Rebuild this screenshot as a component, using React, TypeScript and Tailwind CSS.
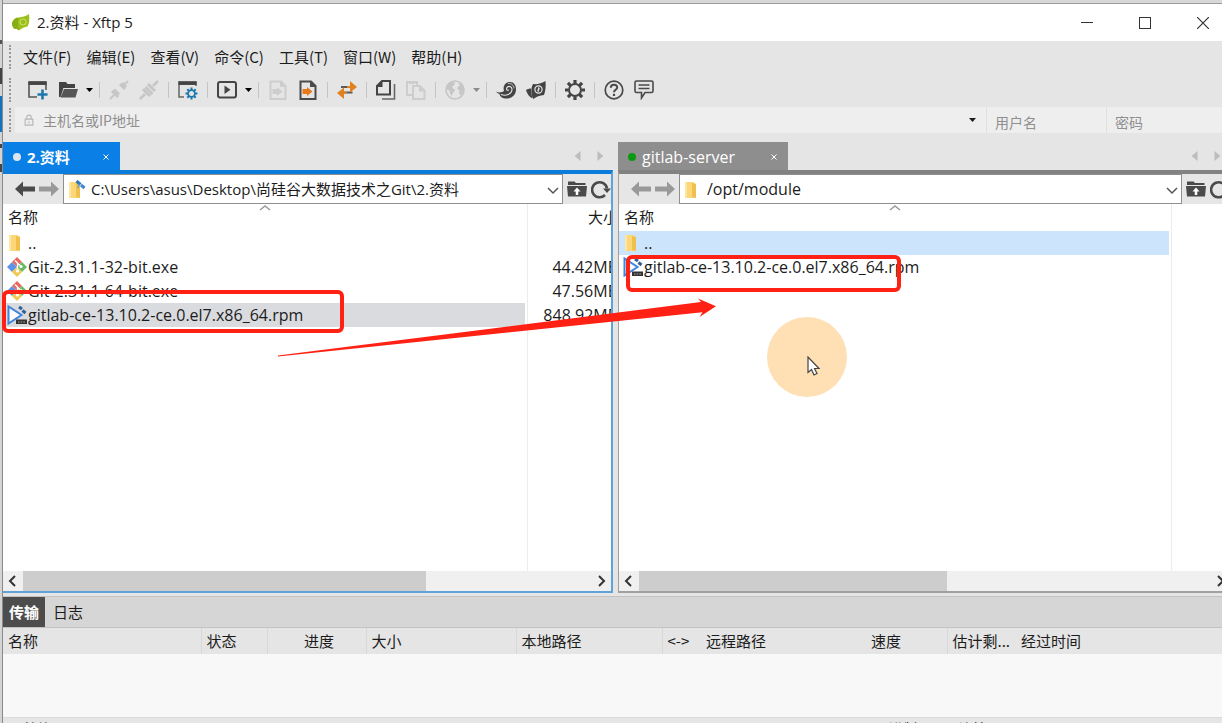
import { useState } from "react";
import type { ReactNode } from "react";
import clsx from "clsx";

interface FileItem {
  name: string;
  kind: "folder" | "git" | "rpm";
  size?: string;
}

interface PaneProps {
  id: string;
  title: string;
  path: string;
  files: FileItem[];
  active?: boolean;
  initialSelected: string;
}

const menuItems = ["文件(F)", "编辑(E)", "查看(V)", "命令(C)", "工具(T)", "窗口(W)", "帮助(H)"];

const localFiles: FileItem[] = [
  { name: "..", kind: "folder" },
  { name: "Git-2.31.1-32-bit.exe", kind: "git", size: "44.42MB" },
  { name: "Git-2.31.1-64-bit.exe", kind: "git", size: "47.56MB" },
  { name: "gitlab-ce-13.10.2-ce.0.el7.x86_64.rpm", kind: "rpm", size: "848.92MB" },
];

const remoteFiles: FileItem[] = [
  { name: "..", kind: "folder" },
  { name: "gitlab-ce-13.10.2-ce.0.el7.x86_64.rpm", kind: "rpm" },
];

const transferColumns = [
  { title: "名称", className: "w-[198px]" },
  { title: "状态", className: "w-[66px] border-l" },
  { title: "进度", className: "w-[99px] border-l text-center" },
  { title: "大小", className: "w-[150px] border-l text-left" },
  { title: "本地路径", className: "w-[146px] border-l" },
  { title: "<->", className: "w-[39px] border-l" },
  { title: "远程路径", className: "w-[165px]" },
  { title: "速度", className: "w-[81px]" },
  { title: "估计剩...", className: "w-[69px] border-l" },
  { title: "经过时间", className: "" },
];

const Icon = ({ children, className }: { children: ReactNode; className?: string }) => (
  <svg viewBox="0 0 20 20" className={clsx("block size-5 shrink-0", className)} fill="none" aria-hidden="true">
    {children}
  </svg>
);

const NewIcon = () => (
  <Icon>
    <path d="M9 17H1V2h17v8" stroke="#555" strokeWidth="1.6" />
    <path d="M.5 3.2h18" stroke="#444" strokeWidth="3.5" />
    <path d="M14.5 9.500v10M9.500 14.500h10" stroke="#1d78ae" strokeWidth="2.600" />
  </Icon>
);

const OpenIcon = () => (
  <Icon>
    <path d="M1 17V2h7l1.500 2H17v4H5.500L2.500 17z" fill="#444" />
    <path d="M6 9h14l-2.500 8.500H2.500z" fill="#555" />
    <path d="M5.500 8.500h13" stroke="#e5e5e5" />
  </Icon>
);

const LinkIcon = () => (
  <Icon>
    <g stroke="#c6c6c6" strokeWidth="3">
      <path d="M1 19l4-4M15 5l4-4" strokeWidth="2" />
      <path d="M3 11l6 6M5 9.500l5 5" />
      <path d="M11 4l5 5M13 3l4 4" />
    </g>
  </Icon>
);

const UnlinkIcon = () => (
  <Icon>
    <g stroke="#c6c6c6">
      <path d="M1 19l5-5M14 6l5-5" strokeWidth="2.500" />
      <path d="M4 9l7 7M9 4l7 7" strokeWidth="3" />
      <path d="M6.500 7l7 7" strokeWidth="2.500" />
    </g>
  </Icon>
);

const PropertiesIcon = () => (
  <Icon>
    <path d="M6 17H1V2h17v4" stroke="#666" strokeWidth="1.500" />
    <path d="M.5 3.200h18" stroke="#444" strokeWidth="3.500" />
    <circle cx="13.500" cy="13.500" r="3.400" stroke="#1d78ae" strokeWidth="1.800" />
    <path
      d="M13.500 7.500v2.500M13.500 17v2.500M7.500 13.500H10M17 13.500h2.500M9.300 9.300l1.700 1.700M16 16l1.700 1.700M17.700 9.300L16 11M11 16l-1.700 1.700"
      stroke="#1d78ae"
      strokeWidth="2"
    />
  </Icon>
);

const PlayIcon = () => (
  <Icon>
    <rect x="1" y="2" width="18" height="15.500" rx="2" stroke="#444" strokeWidth="2" />
    <path d="M7.500 5.500v8.500l6-4.250z" fill="#444" />
  </Icon>
);

const DocArrowIcon = ({ muted }: { muted?: boolean }) => (
  <Icon>
    <path d="M2.500 1.500h10.500l4.500 4.500v13h-15z" stroke={muted ? "#cdcdcd" : "#4a4a4a"} strokeWidth="2" />
    <path d="M12 1v6h6z" fill={muted ? "#cdcdcd" : "#4a4a4a"} />
    <path d="M4.500 9h4.500V7l5.500 4.500L9 16v-2H4.500z" fill={muted ? "#cdcdcd" : "#e77a1d"} />
  </Icon>
);

const TransferIcon = () => (
  <Icon>
    <path d="M4 7h10M6 12.500h9.500" stroke="#5a5a5a" strokeWidth="1.800" />
    <path d="M13 1l7 6-7 5.500zM7 7.500L0 13l7 6z" fill="#e0821f" />
    <path d="M10 7h4M6 12.500h4" stroke="#e0821f" strokeWidth="2.200" />
  </Icon>
);

const CopyIcon = () => (
  <Icon>
    <path d="M6 1h8v13.500H1V6z" stroke="#444" strokeWidth="2" />
    <path d="M6.500 1v6H1z" fill="#444" />
    <path d="M18.500 4v15H6" stroke="#666" strokeWidth="1.600" />
  </Icon>
);

const PasteIcon = () => (
  <Icon>
    <path d="M6 15H1V2h10v3" stroke="#cdcdcd" strokeWidth="2" />
    <path d="M3 1h6v3H3z" fill="#cdcdcd" />
    <path d="M7 6h7l4.500 4.500V19H7z" stroke="#cdcdcd" strokeWidth="2" />
    <path d="M13 6v5.500h5" fill="#cdcdcd" />
  </Icon>
);

const GlobeIcon = () => (
  <Icon>
    <circle cx="10" cy="10" r="9" stroke="#c6c6c6" strokeWidth="1.600" />
    <path d="M2 6.500L6 2l4 .5-1 3-2 1 1 2 2 1-1 2.500-1.500 1-.5 3-2-2.500-.5-3L2 9.500zM13 3l3 1 2.500 4-1 5-2 2.500-1.500-2.500.5-2.500-2-1.500.5-2.500 2-1z" fill="#c6c6c6" />
  </Icon>
);

const ShellIcon = () => (
  <Icon>
    <path d="M0 11.500c3 1.500 6 1 8-.5C6.500 6 9.500 2 14 2c4 0 6 3.500 6 7 0 6-4 9.500-9.500 9.500C6 18.500 4 16.500 3.500 14 2 13.500.8 12.500 0 11.500z" fill="#444" />
    <path d="M5 14.500c5 2 10.500-.5 11-4.500.3-3-2.700-4.500-4.500-3s-.8 4 1.500 3" stroke="#e5e5e5" strokeWidth="1.100" />
    <path d="M12 3.500c3-.5 6 1.500 6 5" stroke="#e5e5e5" strokeWidth=".8" />
  </Icon>
);

const LeafIcon = () => (
  <Icon>
    <path d="M7 4c4 .5 9-.5 12.500-3 .5 5 0 10-1.500 14-4 .5-8 1.500-10.500 4C5 16 4.500 8.500 7 4z" fill="#444" />
    <path d="M0 10c2-1 3-1.500 5-1.500 0 3 .5 7 1.500 10C3 17 1 13.500 0 10z" fill="#444" />
    <circle cx="12.500" cy="9.500" r="3.600" stroke="#e5e5e5" strokeWidth="1.200" />
    <path d="M12 11.500l1-4" stroke="#e5e5e5" strokeWidth="1.500" />
  </Icon>
);

const GearIcon = () => (
  <Icon>
    <circle cx="10" cy="10" r="6" stroke="#444" strokeWidth="2" />
    <path
      d="M10 0v3.500M10 16.500V20M0 10h3.500M16.500 10H20M2.900 2.900l2.500 2.500M14.600 14.600l2.500 2.500M17.100 2.900l-2.500 2.500M5.400 14.600l-2.500 2.500"
      stroke="#444"
      strokeWidth="3.200"
    />
  </Icon>
);

const HelpIcon = () => (
  <Icon>
    <circle cx="10" cy="10" r="8.800" stroke="#4a4a4a" strokeWidth="1.700" />
    <path d="M6.800 7.800c0-4 6.400-4 6.400-.4 0 2.200-3.200 2.500-3.200 4.800" stroke="#4a4a4a" strokeWidth="2" />
    <path d="M10 13.800v2.200" stroke="#4a4a4a" strokeWidth="2.200" />
  </Icon>
);

const ChatIcon = () => (
  <Icon>
    <path d="M2.500 1h15c1 0 1.500.5 1.500 1.500v8.500c0 1-.5 1.500-1.500 1.500H11L7.500 18v-5.500h-5C1.500 12.500 1 12 1 11V2.500C1 1.500 1.500 1 2.500 1z" stroke="#4a4a4a" strokeWidth="1.600" />
    <path d="M4.500 5h11M4.500 8.500h11" stroke="#4a4a4a" strokeWidth="1.400" />
  </Icon>
);

const AppIcon = () => (
  <Icon>
    <path d="M1 10c1-4 4-6 7-5.500C11 4 15 3.500 18 1c.5 5 .5 9-1.500 12.500-3 .5-6 1.500-8.500 4C6.500 16 5 15.500 3.500 16 2 14.500 1 12.500 1 10z" fill="#9bbf1a" />
    <path d="M1 10c1-3 3.500-5 6.500-5-1 4-1 8 .5 12.500-1.500-1.500-3-2-4.500-1.500C2 14.500 1 12.500 1 10z" fill="#86ad14" />
    <circle cx="12" cy="9" r="3" stroke="#c6dc5c" strokeWidth="1.200" />
  </Icon>
);

const FolderIcon = ({ linked }: { linked?: boolean }) => (
  <Icon>
    <path d="M2 2h8l3 2v14H3l-1-1z" fill="#fbd778" />
    <path d="M9 3l4 1v14l-4-1z" fill="#f0c04e" />
    <path d="M2 2h2v16H2z" fill="#fde6a4" />
    {linked && (
      <>
        <path d="M9.500 1l4 3.500" stroke="#2f77bf" strokeWidth="3" />
        <path d="M14 5l3.500 3" stroke="#3f86cc" strokeWidth="3" />
        <path d="M12.500 4.500l-2 3.500" stroke="#6ba3da" strokeWidth="1.500" />
      </>
    )}
  </Icon>
);

const GitIcon = () => (
  <Icon>
    <path d="M10 0l5 5-5 5-5-5z" fill="#e8685f" />
    <path d="M5 5l5 5-5 5-5-5z" fill="#5e94e6" />
    <path d="M15 5l5 5-5 5-5-5z" fill="#63bb62" />
    <path d="M10 10l5 5-5 5-5-5z" fill="#f1ca55" />
    <path d="M8 3.500l5 5M10.500 6v8" stroke="#fff" strokeWidth="1.300" />
    <circle cx="10.500" cy="14" r="1.600" fill="#fff" />
    <circle cx="14" cy="9.500" r="1.600" fill="#fff" />
  </Icon>
);

const RpmIcon = () => (
  <Icon>
    <path d="M1.500 1.500v17l13-8.500z" stroke="#3f86de" strokeWidth="2" fill="#fff" />
    <path d="M12 2l3 2M15.500 5.500l3 2.500" stroke="#2f5f96" strokeWidth="3" />
    <path d="M9 14.500h11V19H9z" fill="#333" />
    <path d="M11 17h7.500" stroke="#aaa" strokeWidth="1.200" strokeDasharray="1.500 1.200" />
  </Icon>
);

const FolderUpIcon = () => (
  <Icon>
    <path d="M1 5V2.500h6.500L9 4h9.500v2H1z" fill="#4a4a4a" />
    <path d="M0 7h20l-1 10.500H1z" fill="#4a4a4a" />
    <path d="M10 16v-4" stroke="#fff" strokeWidth="2.500" />
    <path d="M6.500 12.500L10 8.500l3.500 4z" fill="#fff" />
  </Icon>
);

const RefreshIcon = () => (
  <Icon>
    <path d="M14 16A7.500 7.500 0 1 1 16 9.500" stroke="#4a4a4a" strokeWidth="2.600" />
    <path d="M12 9.500h8L16 14z" fill="#4a4a4a" />
  </Icon>
);

const ArrowIcon = ({ muted, forward }: { muted?: boolean; forward?: boolean }) => (
  <Icon className={clsx(forward && "rotate-180")}>
    <path d="M0 10l8-7.500V7.500h12v5H8v5z" fill={muted ? "#999" : "#4a4a4a"} />
  </Icon>
);

const Chevron = ({ dir, className }: { dir: "up" | "down" | "left" | "right"; className?: string }) => {
  const paths = {
    up: "M1 8l5-4 5 4",
    down: "M1 4l5 5 5-5",
    left: "M8 1L3 6l5 5",
    right: "M4 1l5 5-5 5",
  };
  return (
    <svg viewBox="0 0 12 12" className={clsx("block size-3 shrink-0", className)} fill="none" stroke="currentColor" strokeWidth="1.500" aria-hidden="true">
      <path d={paths[dir]} />
    </svg>
  );
};

const Triangle = ({ dir, className }: { dir: "down" | "left" | "right"; className?: string }) => {
  const paths = { down: "M3 4h7L6.500 8z", left: "M9 0v12L2 6z", right: "M3 0v12l7-6z" };
  return (
    <svg viewBox="0 0 12 12" className={clsx("block", className)} fill="currentColor" aria-hidden="true">
      <path d={paths[dir]} />
    </svg>
  );
};

const Grip = () => <div className="h-6 w-0 border-l-2 border-dotted border-[#999]" />;

const Separator = () => (
  <div className="flex w-[9px] justify-center">
    <div className="h-4 w-px bg-[#c4c4c4]" />
  </div>
);

const ToolButton = ({ label, children }: { label: string; children: ReactNode }) => (
  <button type="button" aria-label={label} className="flex h-7 w-[30px] items-center justify-center">
    {children}
  </button>
);

const MenuCaret = ({ label, muted }: { label: string; muted?: boolean }) => (
  <button type="button" aria-label={label} className={clsx("flex w-3 items-center", muted ? "text-[#8a8a8a]" : "text-black")}>
    <Triangle dir="down" className="size-3" />
  </button>
);

const Toolbar = () => (
  <div className="flex h-[34px] items-center pl-1.5">
    <Grip />
    <div className="ml-3 flex items-center">
      <ToolButton label="新建"><NewIcon /></ToolButton>
      <ToolButton label="打开"><OpenIcon /></ToolButton>
      <MenuCaret label="打开列表" />
      <Separator />
      <ToolButton label="重新连接"><LinkIcon /></ToolButton>
      <ToolButton label="断开"><UnlinkIcon /></ToolButton>
      <Separator />
      <ToolButton label="属性"><PropertiesIcon /></ToolButton>
      <Separator />
      <ToolButton label="传输"><PlayIcon /></ToolButton>
      <MenuCaret label="传输列表" />
      <Separator />
      <ToolButton label="下载"><DocArrowIcon muted /></ToolButton>
      <ToolButton label="上传"><DocArrowIcon /></ToolButton>
      <Separator />
      <ToolButton label="同步"><TransferIcon /></ToolButton>
      <Separator />
      <ToolButton label="复制"><CopyIcon /></ToolButton>
      <ToolButton label="粘贴"><PasteIcon /></ToolButton>
      <Separator />
      <ToolButton label="编码"><GlobeIcon /></ToolButton>
      <MenuCaret label="编码列表" muted />
      <Separator />
      <ToolButton label="Xshell"><ShellIcon /></ToolButton>
      <ToolButton label="Xftp"><LeafIcon /></ToolButton>
      <Separator />
      <ToolButton label="选项"><GearIcon /></ToolButton>
      <Separator />
      <ToolButton label="帮助"><HelpIcon /></ToolButton>
      <ToolButton label="反馈"><ChatIcon /></ToolButton>
    </div>
  </div>
);

const HostBar = () => (
  <div className="flex items-center pl-1.5 text-sm">
    <Grip />
    <div className="ml-1 flex h-[26px] flex-1 items-center bg-[#eeeeee]">
      <svg viewBox="0 0 12 14" className="ml-2 h-3 w-3" fill="none" stroke="#b5b5b5" aria-hidden="true">
        <path d="M1.500 6h9v7h-9zM3.500 6V3.500c0-3 5-3 5 0V6M6 8.500v2.500" strokeWidth="1.300" />
      </svg>
      <input
        aria-label="主机名或IP地址"
        placeholder="主机名或IP地址"
        className="ml-2 min-w-0 flex-1 bg-transparent outline-none placeholder:text-[#8f8f8f]"
      />
      <button type="button" aria-label="主机列表" className="mr-2">
        <Triangle dir="down" className="size-3" />
      </button>
      <input
        aria-label="用户名"
        placeholder="用户名"
        className="h-full w-[120px] border-l border-[#e0e0e0] bg-transparent px-2 pt-1 outline-none placeholder:text-[#8f8f8f]"
      />
      <input
        type="password"
        aria-label="密码"
        placeholder="密码"
        className="h-full w-[116px] border-l border-[#e0e0e0] bg-transparent px-2 pt-1 outline-none placeholder:text-[#8f8f8f]"
      />
    </div>
  </div>
);

const FileGlyph = ({ kind }: { kind: FileItem["kind"] }) => {
  if (kind === "folder") return <FolderIcon />;
  if (kind === "git") return <GitIcon />;
  return <RpmIcon />;
};

const FilePane = ({ id, title, path, files, active, initialSelected }: PaneProps) => {
  const [selected, setSelected] = useState(initialSelected);

  return (
    <section className="flex min-h-0 min-w-0 flex-col font-['Open_Sans','Noto_Sans_CJK_SC',sans-serif]">
      <div className="flex h-7 items-stretch justify-between">
        <div
          className={clsx(
            "flex items-center pt-0.5 pl-2.5 text-white",
            active ? "w-[117px] bg-[#0a7fe6] text-[15px] font-bold" : "w-[170px] bg-[#8e8e8e] text-base"
          )}
        >
          <span className={clsx("mr-1.5 size-2 rounded-full", active ? "bg-[#dce6ee]" : "bg-[#0a9a12]")} />
          <span className="flex-1">{title}</span>
          <button type="button" aria-label={`关闭 ${title}`} className="mr-2.5">
            <svg viewBox="0 0 8 8" className="size-2" stroke="currentColor" strokeWidth="1" aria-hidden="true">
              <path d="M1.500 1.500l5 5M6.500 1.500l-5 5" />
            </svg>
          </button>
        </div>
        <div className="mr-2 flex items-center gap-3 text-[#bdbdbd]">
          <button type="button" aria-label="上一个标签">
            <Triangle dir="left" className="size-2.5" />
          </button>
          <button type="button" aria-label="下一个标签">
            <Triangle dir="right" className="size-2.5" />
          </button>
        </div>
      </div>

      <div
        className={clsx(
          "flex min-h-0 flex-1 flex-col border-t-4 border-b-2",
          active ? "border-r-2 border-t-[#0a7cdc] border-r-[#5fa3d9] border-b-[#5fa3d9]" : "border-l border-t-[#828282] border-b-[#a0a0a0] border-l-[#a0a0a0]"
        )}
      >
        <div className="flex h-[30px] items-center bg-[#e6e6e6]">
          <div className="flex w-[60px] items-center gap-1 pl-3">
            <button type="button" aria-label="后退"><ArrowIcon muted={!active} /></button>
            <button type="button" aria-label="前进"><ArrowIcon muted forward /></button>
          </div>
          <div className="relative h-full min-w-0 flex-1">
            <span className="pointer-events-none absolute top-1.5 left-1">
              <FolderIcon linked={active} />
            </span>
            <select
              id={`${id}-path`}
              aria-label="路径"
              className={clsx(
                "h-full w-full appearance-none border border-[#8f8f8f] bg-white pr-6 pl-[27px] outline-none",
                active ? "text-[15px]" : "text-base"
              )}
            >
              <option>{path}</option>
            </select>
            <Chevron dir="down" className="pointer-events-none absolute top-2.5 right-1 text-[#555]" />
          </div>
          <div className="ml-1 flex items-center gap-1">
            <button type="button" aria-label="上级目录"><FolderUpIcon /></button>
            <button type="button" aria-label="刷新"><RefreshIcon /></button>
          </div>
        </div>

        <div className="grid min-h-0 flex-1 overflow-hidden bg-white">
          <table className={clsx("table-fixed border-collapse text-left", active ? "w-[615px]" : "w-full")}>
            <thead>
              <tr className="h-[27px] text-[15px]">
                <th scope="col" className={clsx("relative border-r border-[#ececec] p-0 pl-[5px] font-normal", active ? "w-[524px]" : "w-[552px]")}>
                  名称
                  <Chevron dir="up" className="absolute -top-0.5 left-1/2 -ml-1.5 text-[#999]" />
                </th>
                <th scope="col" className="p-0 text-right font-normal">{active && "大小"}</th>
              </tr>
            </thead>
            <tbody>
              {files.map((file) => (
                <tr key={file.name} className="h-6 text-base leading-6" onClick={() => setSelected(file.name)}>
                  <td className="border-r border-[#ececec] p-0">
                    <div
                      className={clsx(
                        "mr-0.5 flex h-6 items-center gap-px pl-1",
                        selected === file.name && (active ? "bg-[#d9dbdf]" : "bg-[#cce5fc]")
                      )}
                    >
                      <FileGlyph kind={file.kind} />
                      {file.name}
                    </div>
                  </td>
                  <td className="p-0 text-right whitespace-nowrap">{file.size}</td>
                </tr>
              ))}
              <tr>
                <td className="border-r border-[#ececec] p-0" />
                <td className="p-0" />
              </tr>
            </tbody>
          </table>
        </div>

        <div className="flex h-5 items-stretch bg-[#f0f0f0] text-[#333]">
          <button type="button" aria-label="向左滚动" className="flex w-5 items-center justify-center">
            <Chevron dir="left" className="stroke-2" />
          </button>
          <div className="flex-1">
            <div className={clsx("h-full bg-[#cdcdcd]", active ? "w-[71%]" : "w-[54%]")} />
          </div>
          <button type="button" aria-label="向右滚动" className="flex w-5 items-center justify-center">
            <Chevron dir="right" className="stroke-2" />
          </button>
        </div>
      </div>
    </section>
  );
};

const TransferPanel = () => (
  <section>
    <div className="flex h-8 items-stretch border-t border-b border-[#c2c2c2] bg-[#d6d6d6] text-[15px]">
      <button type="button" className="w-[42px] bg-[#4d4d4d] text-center font-bold text-white">传输</button>
      <button type="button" className="px-2">日志</button>
    </div>
    <table className="w-full table-fixed border-collapse text-left text-[15px]">
      <thead>
        <tr className="h-[26px] bg-[#e5e5e5]">
          {transferColumns.map((column) => (
            <th key={column.title} scope="col" className={clsx("border-[#d8d8d8] p-0 pl-[5px] font-normal whitespace-nowrap", column.className)}>
              {column.title}
            </th>
          ))}
        </tr>
      </thead>
    </table>
    <div className="h-[63px] bg-[#f8f8f9]" />
  </section>
);

// What shows of the desktop beside the window
const DesktopEdge = () => (
  <div className="flex w-[3px] shrink-0 flex-col border-r border-[#8a8a8a] bg-[#d4d4d4]">
    <div className="mt-10 h-1 bg-[#555]" />
    <div className="mt-6 h-4 bg-[#444]" />
    <div className="mt-3 h-9 bg-[#1173c4]" />
    <div className="mt-3 h-1 bg-[#444]" />
    <div className="mt-4 h-2 bg-[#444]" />
  </div>
);

const Annotations = () => (
  <div className="pointer-events-none absolute inset-0 overflow-hidden">
    <div className="absolute top-[290px] left-[2px] h-[43px] w-[342px] rounded-md border-4 border-[#ff2214]" />
    <div className="absolute top-[255px] left-[626px] h-[37px] w-[275px] rounded-md border-4 border-[#ff2214]" />
    <svg viewBox="0 0 440 60" className="absolute top-[298px] left-[277px] h-[60px] w-[440px]" fill="#ff2214" aria-hidden="true">
      <path d="M1 57.500L424 4l-3-3.500L439 8.300 422.500 19l3-4.700L1 58.500z" />
    </svg>
    <div className="absolute top-[317px] left-[767px] size-20 rounded-full bg-[#ffe0b5]" />
    <svg viewBox="0 0 14 20" className="absolute top-[356px] left-[807px] h-5 w-3.5" fill="#fff" stroke="#444" strokeWidth="1.200" aria-hidden="true">
      <path d="M1 1v15.500l3.500-3 2.500 5.500 3-1.500-2.500-5h4.500z" />
    </svg>
  </div>
);

const App = () => {
  return (
    <div className="relative flex h-screen overflow-hidden bg-[#d8d8d8] font-['Noto_Sans_CJK_SC',sans-serif] text-[#1c1c1c]">
      <DesktopEdge />
      <main className="mt-[3px] flex min-w-0 flex-1 flex-col overflow-hidden border-t border-[#9c9c9c] bg-[#e5e5e5]">
        <header className="flex h-[37px] shrink-0 items-center bg-white">
          <div className="ml-2 flex flex-1 items-center gap-1.5">
            <AppIcon />
            <h1 className="font-['Open_Sans','Noto_Sans_CJK_SC',sans-serif] text-[15px]">2.资料 - Xftp 5</h1>
          </div>
          <div className="-mr-2.5 flex h-full">
            <button type="button" aria-label="最小化" className="flex w-[58px] items-center justify-center">
              <span className="h-px w-3 bg-[#333]" />
            </button>
            <button type="button" aria-label="最大化" className="flex w-[58px] items-center justify-center">
              <span className="size-3 border border-[#333]" />
            </button>
            <button type="button" aria-label="关闭" className="flex w-[58px] items-center justify-center">
              <svg viewBox="0 0 12 12" className="size-3" stroke="#333" strokeWidth="1.200" aria-hidden="true">
                <path d="M0 0l12 12M12 0L0 12" />
              </svg>
            </button>
          </div>
        </header>

        <nav className="flex h-8 shrink-0 items-center pl-1.5 text-[15px]">
          <Grip />
          <ul className="ml-3 flex gap-[15px]">
            {menuItems.map((item) => (
              <li key={item}>
                <button type="button">{item}</button>
              </li>
            ))}
          </ul>
        </nav>
        <Toolbar />
        <HostBar />

        <div className="mt-[9px] -mr-2 grid min-h-0 flex-1 grid-cols-[610fr_612fr] gap-[5px]">
          <FilePane
            id="local"
            title="2.资料"
            path="C:\Users\asus\Desktop\尚硅谷大数据技术之Git\2.资料"
            files={localFiles}
            initialSelected="gitlab-ce-13.10.2-ce.0.el7.x86_64.rpm"
            active
          />
          <FilePane id="remote" title="gitlab-server" path="/opt/module" files={remoteFiles} initialSelected=".." />
        </div>

        <div className="mt-[3px] shrink-0">
          <TransferPanel />
        </div>
        <footer className="-mb-[18px] flex h-6 shrink-0 border-t border-[#dcdcdc] bg-[#e5e5e5] pl-1.5 text-sm leading-5">
          <span className="flex-1">已就绪</span>
          <span className="w-[70px]">二进制</span>
          <span className="w-[277px]">已连接</span>
        </footer>
      </main>
      <Annotations />
    </div>
  );
};

export default App;
